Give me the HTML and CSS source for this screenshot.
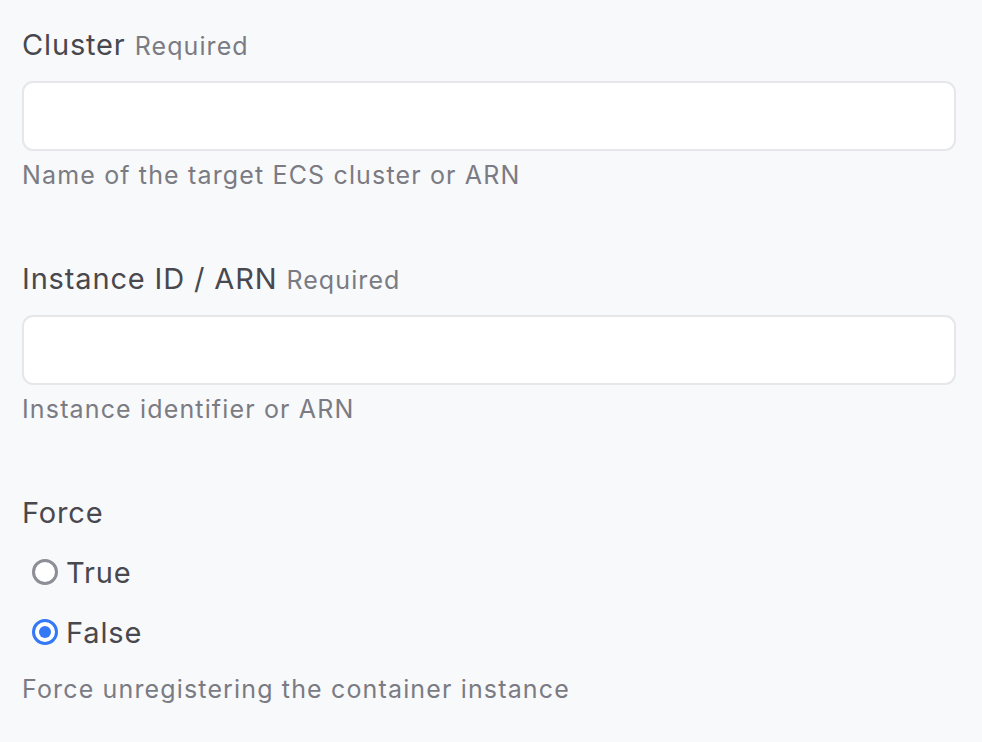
FILE: index.html
```html
<!DOCTYPE html>
<html>
<head>
<meta charset="utf-8">
<link rel="stylesheet" href="styles.css">
</head>
<body>
<form class="form">
  <div class="field">
    <label class="label">Cluster <span class="req">Required</span></label>
    <input class="input" type="text">
    <div class="help">Name of the target ECS cluster or ARN</div>
  </div>
  <div class="field">
    <label class="label">Instance ID / ARN <span class="req">Required</span></label>
    <input class="input" type="text">
    <div class="help">Instance identifier or ARN</div>
  </div>
  <div class="field">
    <div class="label">Force</div>
    <div class="radios">
      <label class="radio"><span class="dot"></span><span>True</span></label>
      <label class="radio"><span class="dot checked"></span><span>False</span></label>
    </div>
    <div class="help help-radio">Force unregistering the container instance</div>
  </div>
</form>
</body>
</html>
```
FILE: styles.css
```css
html, body {
  margin: 0;
  padding: 0;
  background: #f8f9fb;
}
body {
  font-family: Inter, "Noto Sans", sans-serif;
  color: #48484e;
}
.form {
  padding: 27px 26px 0 22px;
  display: flex;
  flex-direction: column;
  gap: 70px;
}
.field {
  display: flex;
  flex-direction: column;
}
.label {
  font-size: 29px;
  line-height: 36px;
  letter-spacing: 0.85px;
  color: #48484e;
}
.req {
  font-size: 25px;
  letter-spacing: 1.1px;
  color: #7b7b83;
}
.input {
  margin: 17px 0 0;
  height: 70px;
  box-sizing: border-box;
  border: 2px solid #e6e6eb;
  border-radius: 11px;
  background: #fff;
  font: inherit;
}
.help {
  margin-top: 8px;
  font-size: 25px;
  line-height: 32px;
  letter-spacing: 1.15px;
  color: #7b7b83;
}
.radios {
  margin-top: 11px;
  display: flex;
  flex-direction: column;
}
.radio {
  height: 60px;
  display: flex;
  align-items: center;
  gap: 8px;
  padding-left: 10px;
  font-size: 29px;
  letter-spacing: 0.85px;
  color: #48484e;
}
.dot {
  width: 26px;
  height: 26px;
  box-sizing: border-box;
  border: 3px solid #8e8e96;
  border-radius: 50%;
  background: #fff;
  display: flex;
  align-items: center;
  justify-content: center;
}
.dot.checked {
  border-color: #3478f6;
}
.dot.checked::after {
  content: "";
  width: 12px;
  height: 12px;
  border-radius: 50%;
  background: #3478f6;
}
.help-radio {
  margin-top: 11px;
}
```
